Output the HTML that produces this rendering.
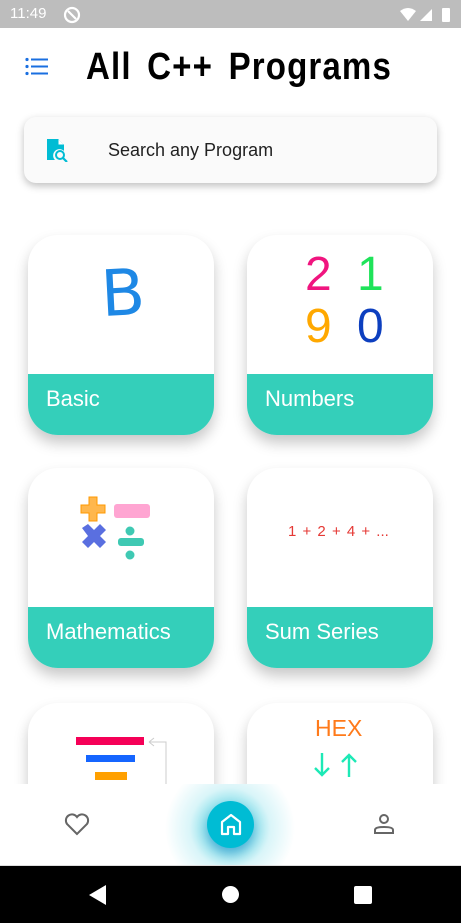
<!DOCTYPE html>
<html><head><meta charset="utf-8"><style>
*{margin:0;padding:0;box-sizing:border-box}
body{width:461px;height:923px;overflow:hidden;background:#fff;font-family:"Liberation Sans",sans-serif;position:relative}
.status{position:absolute;top:0;left:0;width:461px;height:28px;background:#bdbdbd;color:#fff;font-size:15px}
.title{position:absolute;left:86px;top:46px;font-size:38px;font-weight:bold;letter-spacing:1.3px;word-spacing:6px;color:#000;transform:scaleX(0.87);transform-origin:left;white-space:nowrap}
.search{position:absolute;left:24px;top:117px;width:413px;height:66px;background:#fafafa;border-radius:12px;box-shadow:0 3px 8px rgba(0,0,0,.25)}
.search span{position:absolute;left:84px;top:23px;font-size:18px;color:#222}
.card{position:absolute;width:186px;height:200px;background:#fff;border-radius:30px;overflow:hidden;box-shadow:0 8px 14px rgba(0,0,0,.22)}
.band{position:absolute;left:0;right:0;top:139px;bottom:0;background:#34cfba}
.band span{position:absolute;left:18px;top:12px;color:#fff;font-size:22px}
.nav{position:absolute;left:0;top:784px;width:461px;height:82px;background:#fff}
.sys{position:absolute;left:0;top:866px;width:461px;height:57px;background:#000}
</style></head><body>
<div class="status"><span style="position:absolute;left:10px;top:5px">11:49</span>
<svg style="position:absolute;left:63px;top:6px" width="18" height="18" viewBox="0 0 18 18"><circle cx="9" cy="9" r="7" fill="none" stroke="#fff" stroke-width="2.2"/><path d="M5 5L13 13" stroke="#fff" stroke-width="2.2"/></svg>
<svg style="position:absolute;left:398px;top:6px" width="56" height="18" viewBox="0 0 56 18"><path d="M2 5Q10 -1 18 5L10 15Z" fill="#fff"/><path d="M22 15L34 3V15Z" fill="#fff"/><rect x="44" y="2" width="8" height="14" rx="1" fill="#fff"/></svg>
</div>
<svg style="position:absolute;left:25px;top:57px" width="24" height="20" viewBox="0 0 24 20"><g fill="#1a6fe0"><circle cx="2" cy="2.5" r="1.6"/><circle cx="2" cy="9.5" r="1.6"/><circle cx="2" cy="16.5" r="1.6"/><rect x="6" y="1.5" width="17" height="2"/><rect x="6" y="8.5" width="17" height="2"/><rect x="6" y="15.5" width="17" height="2"/></g></svg>
<div class="title">All C++ Programs</div>
<div class="search">
<svg style="position:absolute;left:22px;top:21px" width="24" height="24" viewBox="0 0 24 24"><path d="M1 1H12L18 7V13A6 6 0 0 0 9 22H1Z" fill="#00bcd4"/><path d="M12 1V7H18" fill="#fff" stroke="#00bcd4" stroke-width="1"/><circle cx="14" cy="17" r="4" fill="none" stroke="#00bcd4" stroke-width="2"/><path d="M17 20L21 24" stroke="#00bcd4" stroke-width="2.2"/></svg>
<span>Search any Program</span></div>

<div class="card" style="left:28px;top:235px"><div style="position:absolute;left:73px;top:22px;font-size:64px;color:#1e88e5;font-family:'DejaVu Sans',sans-serif;transform:rotate(-3deg)">B</div><div class="band"><span>Basic</span></div></div>
<div class="card" style="left:247px;top:235px">
<div style="position:absolute;left:58px;top:14px;font-size:48px;line-height:52px;letter-spacing:6px"><span style="color:#f0157f">2</span>&nbsp;<span style="color:#1fe35a">1</span><br><span style="color:#ffa800">9</span>&nbsp;<span style="color:#0d3fbf">0</span></div>
<div class="band"><span>Numbers</span></div></div>

<div class="card" style="left:28px;top:468px">
<svg style="position:absolute;left:52px;top:28px" width="72" height="66" viewBox="0 0 72 66"><path d="M8 0H16V8H24V16H16V24H8V16H0V8H8Z" fill="#ffb74d" stroke="#ff9800" transform="translate(1,1)"/><rect x="34" y="8" width="36" height="14" rx="3" fill="#ffa5d2"/><path d="M4 36L10 32L16 38L22 32L28 38L22 44L28 50L22 56L16 50L10 56L4 50L10 44Z" fill="#5a6fe0" transform="translate(-2,-4)"/><circle cx="50" cy="35" r="4.5" fill="#3fc9b3"/><rect x="38" y="42" width="26" height="8" rx="3" fill="#3fc9b3"/><circle cx="50" cy="59" r="4.5" fill="#3fc9b3"/></svg>
<div class="band"><span>Mathematics</span></div></div>
<div class="card" style="left:247px;top:468px"><div style="position:absolute;left:41px;top:55px;font-size:15px;color:#e53935;word-spacing:2px">1 + 2 + 4 + ...</div><div class="band"><span>Sum Series</span></div></div>

<div class="card" style="left:28px;top:703px">
<div style="position:absolute;left:48px;top:34px;width:68px;height:8px;background:#f50057"></div>
<div style="position:absolute;left:58px;top:52px;width:49px;height:7px;background:#1565ff"></div>
<div style="position:absolute;left:67px;top:69px;width:32px;height:8px;background:#ffa000"></div>
<svg style="position:absolute;left:120px;top:34px" width="20" height="50"><path d="M1 5H18V50M1 5L6 1M1 5L6 9" fill="none" stroke="#ccc"/></svg>
</div>
<div class="card" style="left:247px;top:703px"><div style="position:absolute;left:68px;top:12px;font-size:23px;color:#ff7a1a">HEX</div>
<svg style="position:absolute;left:66px;top:48px" width="48" height="28" viewBox="0 0 48 28"><g fill="none" stroke="#1de9b6" stroke-width="2.4"><path d="M9 2V24M2 17L9 24L16 17"/><path d="M36 26V4M29 11L36 4L43 11"/></g></svg></div>

<div class="nav"></div>
<div style="position:absolute;left:150px;top:784px;width:160px;height:82px;background:radial-gradient(circle at 80px 44px,rgba(0,188,212,.5) 20px,rgba(0,188,212,.15) 40px,rgba(0,188,212,0) 65px)"></div>
<div style="position:absolute;left:207px;top:801px;width:47px;height:47px;border-radius:50%;background:#00bcd4;box-shadow:0 6px 10px rgba(0,100,180,.35)"></div>
<svg style="position:absolute;left:219px;top:812px" width="24" height="24" viewBox="0 0 24 24"><path d="M3 22V10L12 3L21 10V22H15V15H9V22Z" fill="none" stroke="#fff" stroke-width="2.2" stroke-linejoin="round"/></svg>
<svg style="position:absolute;left:64px;top:812px" width="26" height="24" viewBox="0 0 26 24"><path d="M13 22L3 12A5.5 5.5 0 0 1 13 5A5.5 5.5 0 0 1 23 12Z" fill="none" stroke="#666" stroke-width="2"/></svg>
<svg style="position:absolute;left:372px;top:812px" width="24" height="24" viewBox="0 0 24 24"><circle cx="12" cy="7" r="4" fill="none" stroke="#666" stroke-width="2"/><path d="M3 21V18Q3 15 12 15Q21 15 21 18V21Z" fill="none" stroke="#666" stroke-width="2"/></svg>
<div style="position:absolute;left:0;top:865px;width:461px;height:1px;background:#ddd"></div>
<div class="sys">
<svg style="position:absolute;left:88px;top:18px" width="20" height="22"><path d="M18 1V21L1 11Z" fill="#fff"/></svg>
<div style="position:absolute;left:222px;top:20px;width:17px;height:17px;border-radius:50%;background:#fff"></div>
<div style="position:absolute;left:354px;top:20px;width:18px;height:18px;border-radius:2px;background:#fff"></div>
</div>
</body></html>
